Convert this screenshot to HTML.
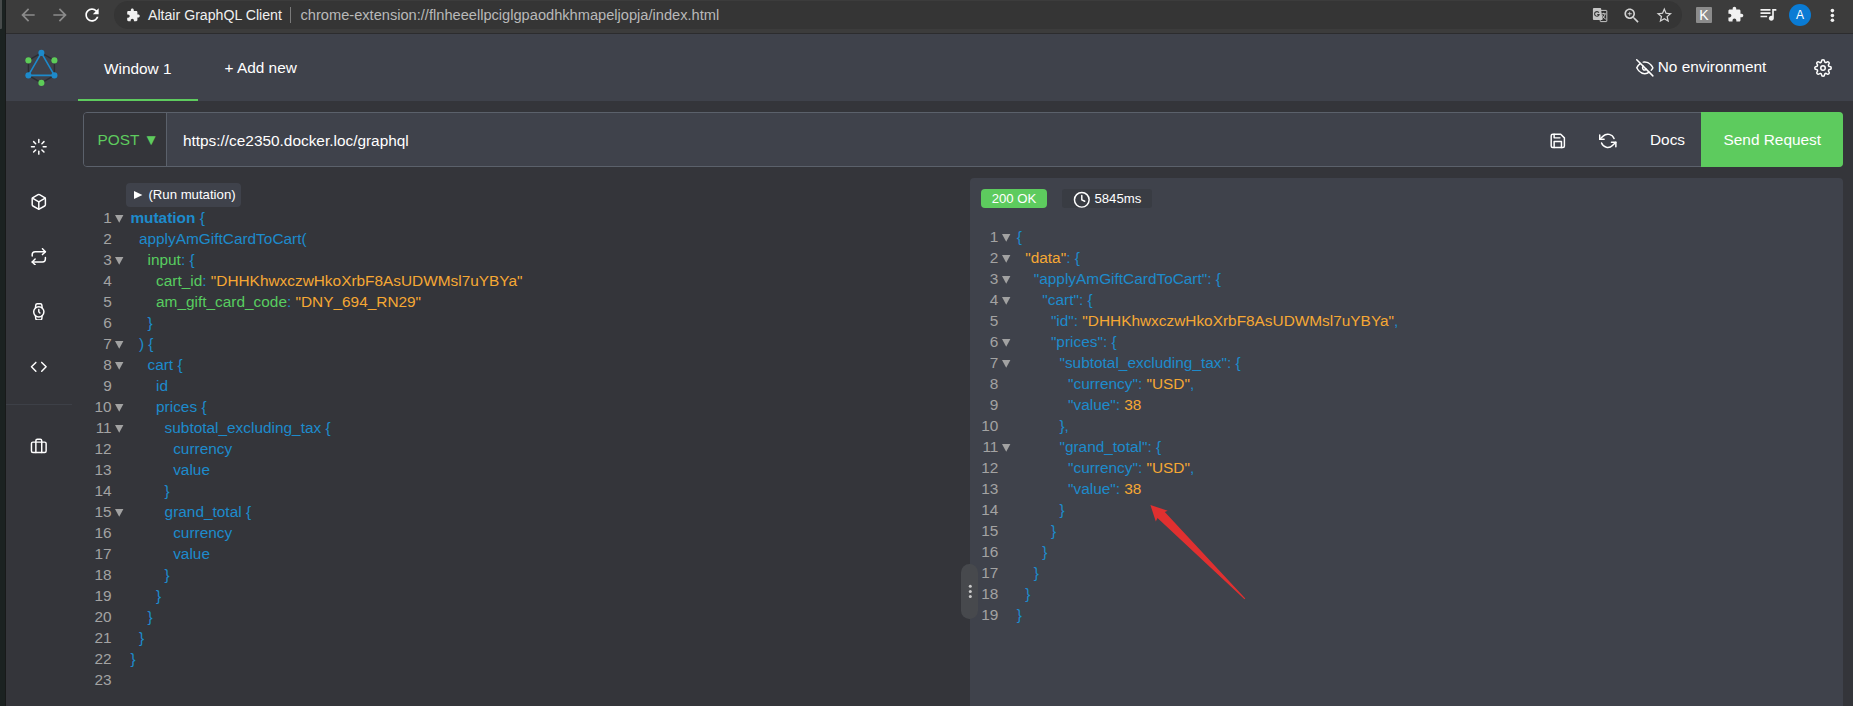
<!DOCTYPE html>
<html lang="en">
<head>
<meta charset="utf-8">
<title>Altair GraphQL Client</title>
<style>
*{box-sizing:border-box;margin:0;padding:0}
html,body{width:1853px;height:706px;overflow:hidden;background:#34353a;font-family:"Liberation Sans",sans-serif;color:#fff}
body{position:relative}
.abs{position:absolute}
svg.fi{fill:none;stroke:#fff;stroke-width:2;stroke-linecap:round;stroke-linejoin:round;position:absolute}
/* left desktop strip */
#strip{left:0;top:0;width:6px;height:706px;background:#1b2221;border-right:1px solid #181a1a}
#strip2{left:0;top:0;width:2px;height:29px;background:#474b4b;border-radius:0 0 1px 0}
/* chrome toolbar */
#chrome{left:6px;top:0;width:1847px;height:34px;background:#3c3c3c;border-bottom:1px solid #2c2c2e}
#omni{left:108px;top:1px;width:1568px;height:28px;border-radius:14px;background:#353535}
#chrome .t{position:absolute;white-space:nowrap;font-size:14px;line-height:18px;top:6px}
/* app header */
#header{left:6px;top:34px;width:1847px;height:67px;background:#3f424b}
#tab1{left:78px;top:34px;width:120px;height:67px;border-bottom:2px solid #5ecb5e}
.hl{position:absolute;white-space:nowrap;font-size:15.4px;line-height:20px;color:#fff}
/* url bar */
#urlbar{left:83px;top:112px;width:1760px;height:55px;background:#3f424b;border:1px solid #5b616b;border-radius:4px}
#method{left:0;top:0;width:83px;height:53px;background:#34353a;border-right:1px solid #5b616b;border-radius:3px 0 0 3px}
#send{left:1701px;top:112px;width:142px;height:55px;background:#5dcb5e;border-radius:0 4px 4px 0}
/* editors */
.code{position:absolute;font-size:15.4px;line-height:21px;white-space:pre;color:#1d8bcc}
.ln{position:absolute;text-align:right;font-size:15.4px;line-height:21px;color:#a3a3a3;white-space:pre}
.fold{position:absolute;font-size:11px;line-height:21px;color:#a9a9a9}
.k{font-weight:bold}
.g{color:#58cd60}
.o{color:#f6a834}
.p{color:#1d8bcc}
#respane{left:970px;top:178px;width:873px;height:540px;background:#3f424b;border-radius:4px}
#ok{left:981px;top:189px;width:66px;height:19px;background:#5dcb5e;border-radius:4px;font-size:13.2px;line-height:19px;text-align:center}
#time{left:1062px;top:189px;width:90px;height:19px;background:#393c43;border-radius:3px}
#runbtn{left:126px;top:183px;width:115px;height:24px;background:#3f424b;border-radius:4px;font-size:13.2px;line-height:23px;white-space:nowrap}
#handle{left:961px;top:564px;width:17px;height:55px;background:#47494d;border-radius:8.500px}
</style>
</head>
<body>
<div id="strip" class="abs"></div><div id="strip2" class="abs"></div>

<!-- ================= Chrome toolbar ================= -->
<div id="chrome" class="abs">
  <div id="omni" class="abs"></div>
  <svg class="abs" style="left:12px;top:5px" width="20" height="20" viewBox="0 0 24 24"><path fill="#8b8b8b" d="M20 11H7.830l5.590-5.590L12 4l-8 8 8 8 1.410-1.410L7.830 13H20v-2z"/></svg>
  <svg class="abs" style="left:44px;top:5px" width="20" height="20" viewBox="0 0 24 24"><path fill="#8b8b8b" d="M12 4l-1.410 1.410L16.170 11H4v2h12.170l-5.580 5.590L12 20l8-8z"/></svg>
  <svg class="abs" style="left:76px;top:5px" width="20" height="20" viewBox="0 0 24 24"><path fill="#fff" d="M17.650 6.350C16.200 4.900 14.210 4 12 4c-4.420 0-7.990 3.580-7.990 8s3.570 8 7.990 8c3.730 0 6.840-2.550 7.730-6h-2.080c-.82 2.330-3.040 4-5.650 4-3.310 0-6-2.690-6-6s2.690-6 6-6c1.660 0 3.140.69 4.220 1.780L13 11h7V4l-2.350 2.350z"/></svg>
  <svg class="abs" style="left:119.500px;top:7.700px" width="14.400" height="14.400" viewBox="0 0 24 24"><path fill="#f1f1f1" d="M20.500 11H19V7c0-1.100-.9-2-2-2h-4V3.500C13 2.120 11.880 1 10.500 1S8 2.120 8 3.500V5H4c-1.100 0-1.990.9-1.990 2v3.800H3.500c1.490 0 2.700 1.210 2.700 2.700s-1.210 2.700-2.700 2.700H2V20c0 1.100.9 2 2 2h3.800v-1.500c0-1.490 1.210-2.700 2.700-2.700 1.490 0 2.700 1.210 2.700 2.700V22H17c1.100 0 2-.9 2-2v-4h1.500c1.380 0 2.500-1.120 2.500-2.500S21.880 11 20.500 11z"/></svg>
  <div class="t" id="ctitle" style="left:142px;color:#f0f0f0;font-size:14.15px">Altair GraphQL Client</div>
  <div class="abs" style="left:284px;top:7px;width:1px;height:16px;background:#7a7a7a"></div>
  <div class="t" id="curl" style="left:294.500px;color:#b9b9b9;font-size:14.63px">chrome-extension://flnheeellpciglgpaodhkhmapeljopja/index.html</div>
  <!-- translate -->
  <svg class="abs" style="left:1586px;top:7px" width="16" height="16" viewBox="0 0 16 16"><rect x="8.200" y="3.400" width="6.600" height="11.200" rx="0.500" fill="#2f2f2f" stroke="#c6c6c6" stroke-width="1"/><path d="M9.500 6.800h4.300M11.600 5.800v1M13.100 6.900c-.5 2.200-1.700 3.900-3.500 5M10.300 8.300c.7 1.700 1.900 3 3.500 3.900" fill="none" stroke="#d8d8d8" stroke-width="0.900"/><path d="M1.900 0.900h6.300a1 1 0 0 1 1 1v1.300l1.300 9.800H1.900a1 1 0 0 1-1-1V1.900a1 1 0 0 1 1-1z" fill="#c6c6c6"/><path d="M6.900 5.800A2.300 2.300 0 1 0 7.100 7.500H5.200" fill="none" stroke="#3a3a3a" stroke-width="1.100"/></svg>
  <svg class="abs" style="left:1616.200px;top:5.800px" width="19.500" height="19.500" viewBox="0 0 24 24"><path fill="#d4d4d4" d="M15.500 14h-.79l-.28-.27C15.410 12.590 16 11.110 16 9.500 16 5.910 13.090 3 9.500 3S3 5.910 3 9.500 5.910 16 9.500 16c1.610 0 3.090-.59 4.230-1.570l.27.28v.79l5 4.990L20.490 19l-4.990-5zm-6 0C7.010 14 5 11.990 5 9.500S7.010 5 9.500 5 14 7.010 14 9.500 11.990 14 9.500 14zm2.500-4h-2v2H9v-2H7V9h2V7h1v2h2v1z"/></svg>
  <svg class="abs" style="left:1648.600px;top:6.300px" width="18.600" height="18.600" viewBox="0 0 24 24"><path fill="#d4d4d4" d="M22 9.240l-7.190-.62L12 2 9.190 8.630 2 9.240l5.460 4.730L5.820 21 12 17.270 18.180 21l-1.630-7.030L22 9.240zM12 15.400l-3.760 2.270 1-4.280-3.320-2.880 4.380-.38L12 6.100l1.710 4.040 4.380.38-3.320 2.880 1 4.280L12 15.400z"/></svg>
  <div class="abs" style="left:1690px;top:7px;width:16px;height:16px;background:#8c8c8c;border-radius:1px;color:#fff;font-size:14px;line-height:16px;text-align:center">K</div>
  <svg class="abs" style="left:1721px;top:6px" width="17" height="17" viewBox="0 0 24 24"><path fill="#f1f1f1" d="M20.500 11H19V7c0-1.100-.9-2-2-2h-4V3.500C13 2.120 11.880 1 10.500 1S8 2.120 8 3.500V5H4c-1.100 0-1.990.9-1.990 2v3.800H3.500c1.490 0 2.700 1.210 2.700 2.700s-1.210 2.700-2.700 2.700H2V20c0 1.100.9 2 2 2h3.800v-1.500c0-1.490 1.210-2.700 2.700-2.700 1.490 0 2.700 1.210 2.700 2.700V22H17c1.100 0 2-.9 2-2v-4h1.500c1.380 0 2.500-1.120 2.500-2.500S21.880 11 20.500 11z"/></svg>
  <svg class="abs" style="left:1751.600px;top:4.200px" width="20" height="20" viewBox="0 0 24 24"><path fill="#f1f1f1" d="M15 6H3v2h12V6zm0 4H3v2h12v-2zM3 16h8v-2H3v2zM17 6v8.180c-.31-.11-.65-.18-1-.18-1.660 0-3 1.340-3 3s1.340 3 3 3 3-1.340 3-3V8h3V6h-5z"/></svg>
  <div class="abs" style="left:1783px;top:4px;width:22px;height:22px;border-radius:11px;background:#0a7bd4;color:#fff;font-size:12px;line-height:22px;text-align:center">A</div>
  <svg class="abs" style="left:1820px;top:5px" width="12" height="20" viewBox="0 0 12 20"><circle cx="6.400" cy="5.600" r="1.800" fill="#f1f1f1"/><circle cx="6.400" cy="10.500" r="1.800" fill="#f1f1f1"/><circle cx="6.400" cy="15.300" r="1.800" fill="#f1f1f1"/></svg>
</div>

<!-- ================= App header ================= -->
<div id="header" class="abs"></div>
<div id="tab1" class="abs"></div>
<div class="hl" style="left:104px;top:59px">Window 1</div>
<div class="hl" style="left:224.500px;top:58px">+ Add new</div>
<div class="hl" style="left:1657.700px;top:57px">No environment</div>

<!-- ================= URL bar ================= -->
<div id="urlbar" class="abs"><div id="method" class="abs"></div></div>
<div class="hl" style="left:97.500px;top:130px;color:#5ecb5e">POST ▼</div>
<div class="hl" style="left:182.900px;top:131px">https://ce2350.docker.loc/graphql</div>
<div class="hl" style="left:1650px;top:130px">Docs</div>
<div id="send" class="abs"></div>
<div class="hl" style="left:1723.500px;top:130px">Send Request</div>

<!-- ================= Query editor ================= -->
<div id="runbtn" class="abs"><svg class="abs" style="left:8.300px;top:8px" width="9" height="9" viewBox="0 0 9 9"><polygon points="0,0 8.400,4 0,8" fill="#fff"/></svg><span style="margin-left:22.400px">(Run mutation)</span></div>
<div class="ln" style="left:84px;top:207px;width:27.700px">1
2
3
4
5
6
7
8
9
10
11
12
13
14
15
16
17
18
19
20
21
22
23</div>
<div class="code" style="left:130.400px;top:207px"><span class="k">mutation</span> {
  applyAmGiftCardToCart(
    <span class="g">input</span>: {
      <span class="g">cart_id</span>: <span class="o">"DHHKhwxczwHkoXrbF8AsUDWMsl7uYBYa"</span>
      <span class="g">am_gift_card_code</span>: <span class="o">"DNY_694_RN29"</span>
    }
  ) {
    cart {
      id
      prices {
        subtotal_excluding_tax {
          currency
          value
        }
        grand_total {
          currency
          value
        }
      }
    }
  }
}
</div>

<!-- ================= Response pane ================= -->
<div id="respane" class="abs"></div>
<div id="ok" class="abs">200 OK</div>
<div id="time" class="abs"></div>
<div class="hl" style="left:1094.400px;top:189px;font-size:13.2px;line-height:19px">5845ms</div>
<div class="ln" style="left:970px;top:226px;width:28.400px">1
2
3
4
5
6
7
8
9
10
11
12
13
14
15
16
17
18
19</div>
<div class="code" style="left:1016.700px;top:226px">{
  <span class="o">"data"</span>: {
    "applyAmGiftCardToCart": {
      "cart": {
        "id": <span class="o">"DHHKhwxczwHkoXrbF8AsUDWMsl7uYBYa"</span>,
        "prices": {
          "subtotal_excluding_tax": {
            "currency": <span class="o">"USD"</span>,
            "value": <span class="o">38</span>
          },
          "grand_total": {
            "currency": <span class="o">"USD"</span>,
            "value": <span class="o">38</span>
          }
        }
      }
    }
  }
}
</div>
<svg class="abs" style="left:114.8px;top:207px" width="10" height="483" viewBox="0 0 10 483"><polygon points="0,7.9 8.400,7.9 4.200,15.7" fill="#a2a2a2"/><polygon points="0,49.9 8.400,49.9 4.200,57.7" fill="#a2a2a2"/><polygon points="0,133.9 8.400,133.9 4.200,141.7" fill="#a2a2a2"/><polygon points="0,154.9 8.400,154.9 4.200,162.7" fill="#a2a2a2"/><polygon points="0,196.9 8.400,196.9 4.200,204.7" fill="#a2a2a2"/><polygon points="0,217.9 8.400,217.9 4.200,225.7" fill="#a2a2a2"/><polygon points="0,301.9 8.400,301.9 4.200,309.7" fill="#a2a2a2"/></svg>
<svg class="abs" style="left:1001.600px;top:226px" width="10" height="483" viewBox="0 0 10 483"><polygon points="0,7.9 8.400,7.9 4.200,15.7" fill="#a2a2a2"/><polygon points="0,28.9 8.400,28.9 4.200,36.7" fill="#a2a2a2"/><polygon points="0,49.9 8.400,49.9 4.200,57.7" fill="#a2a2a2"/><polygon points="0,70.9 8.400,70.9 4.200,78.7" fill="#a2a2a2"/><polygon points="0,112.9 8.400,112.9 4.200,120.7" fill="#a2a2a2"/><polygon points="0,133.9 8.400,133.9 4.200,141.7" fill="#a2a2a2"/><polygon points="0,217.9 8.400,217.9 4.200,225.7" fill="#a2a2a2"/></svg>
<div id="handle" class="abs"></div>
<!-- logo -->
<svg class="abs" style="left:0;top:34.300px" width="80" height="67" viewBox="0 34 80 67"><polygon points="41.4,52.9 54.4,60.4 54.4,75.4 41.4,82.9 28.4,75.4 28.4,60.4" fill="none" stroke="#2c2e33" stroke-width="1.400"/><polygon points="41.4,52.9 54.4,75.4 28.4,75.4" fill="none" stroke="#1d8acb" stroke-width="1.600"/><circle cx="41.4" cy="52.9" r="3.050" fill="#1d8acb"/><circle cx="54.4" cy="60.4" r="3.050" fill="#5dcc58"/><circle cx="54.4" cy="75.4" r="3.050" fill="#1d8acb"/><circle cx="41.4" cy="82.9" r="3.050" fill="#5dcc58"/><circle cx="28.4" cy="75.4" r="3.050" fill="#1d8acb"/><circle cx="28.4" cy="60.4" r="3.050" fill="#5dcc58"/></svg>
<!-- sidebar icons -->
<svg class="fi" style="left:30.10px;top:137.50px" width="17.6" height="17.6" viewBox="0 0 24 24"><line x1="12" y1="2" x2="12" y2="6"/><line x1="12" y1="18" x2="12" y2="22"/><line x1="4.930" y1="4.930" x2="7.760" y2="7.760"/><line x1="16.240" y1="16.240" x2="19.070" y2="19.070"/><line x1="2" y1="12" x2="6" y2="12"/><line x1="18" y1="12" x2="22" y2="12"/><line x1="4.930" y1="19.070" x2="7.760" y2="16.240"/><line x1="16.240" y1="7.760" x2="19.070" y2="4.930"/></svg>
<svg class="fi" style="left:30.20px;top:192.80px" width="17.6" height="17.6" viewBox="0 0 24 24"><path d="M21 16V8a2 2 0 0 0-1-1.730l-7-4a2 2 0 0 0-2 0l-7 4A2 2 0 0 0 3 8v8a2 2 0 0 0 1 1.730l7 4a2 2 0 0 0 2 0l7-4A2 2 0 0 0 21 16z"/><polyline points="3.270 6.960 12 12.010 20.730 6.960"/><line x1="12" y1="22.080" x2="12" y2="12"/></svg>
<svg class="fi" style="left:30.20px;top:247.90px" width="17.6" height="17.6" viewBox="0 0 24 24"><polyline points="17 1 21 5 17 9"/><path d="M3 11V9a4 4 0 0 1 4-4h14"/><polyline points="7 23 3 19 7 15"/><path d="M21 13v2a4 4 0 0 1-4 4H3"/></svg>
<svg class="fi" style="left:30.20px;top:302.60px" width="17.6" height="17.6" viewBox="0 0 24 24"><circle cx="12" cy="12" r="7"/><polyline points="12 9 12 12 13.500 13.500"/><path d="M16.510 17.350l-.35 3.830a2 2 0 0 1-2 1.820H9.830a2 2 0 0 1-2-1.820l-.35-3.830m.01-10.700l.35-3.830A2 2 0 0 1 9.830 1h4.350a2 2 0 0 1 2 1.820l.35 3.830"/></svg>
<svg class="fi" style="left:30.20px;top:358.00px" width="17.6" height="17.6" viewBox="0 0 24 24"><polyline points="16 18 22 12 16 6"/><polyline points="8 6 2 12 8 18"/></svg>
<div class="abs" style="left:6px;top:404px;width:66px;height:1px;background:#3d4047"></div>
<svg class="fi" style="left:30.20px;top:437.20px" width="17.6" height="17.6" viewBox="0 0 24 24"><rect x="2" y="7" width="20" height="14" rx="2" ry="2"/><path d="M16 21V5a2 2 0 0 0-2-2h-4a2 2 0 0 0-2 2v16"/></svg>
<svg class="fi" style="left:1636.00px;top:59.20px" width="17.6" height="17.6" viewBox="0 0 24 24"><path d="M17.940 17.940A10.070 10.070 0 0 1 12 20c-7 0-11-8-11-8a18.450 18.450 0 0 1 5.060-5.940M9.900 4.240A9.120 9.120 0 0 1 12 4c7 0 11 8 11 8a18.500 18.500 0 0 1-2.160 3.190m-6.720-1.070a3 3 0 1 1-4.240-4.240"/><line x1="1" y1="1" x2="23" y2="23"/></svg>
<svg class="fi" style="left:1814.00px;top:59.10px" width="18" height="18" viewBox="0 0 24 24"><circle cx="12" cy="12" r="3"/><path d="M19.400 15a1.650 1.650 0 0 0 .33 1.820l.06.06a2 2 0 0 1 0 2.830 2 2 0 0 1-2.830 0l-.06-.06a1.650 1.650 0 0 0-1.820-.33 1.650 1.650 0 0 0-1 1.510V21a2 2 0 0 1-2 2 2 2 0 0 1-2-2v-.09A1.650 1.650 0 0 0 9 19.400a1.650 1.650 0 0 0-1.820.33l-.06.06a2 2 0 0 1-2.830 0 2 2 0 0 1 0-2.830l.06-.06a1.650 1.650 0 0 0 .33-1.820 1.650 1.650 0 0 0-1.510-1H3a2 2 0 0 1-2-2 2 2 0 0 1 2-2h.09A1.650 1.650 0 0 0 4.600 9a1.650 1.650 0 0 0-.33-1.820l-.06-.06a2 2 0 0 1 0-2.830 2 2 0 0 1 2.830 0l.06.06a1.650 1.650 0 0 0 1.820.33H9a1.650 1.650 0 0 0 1-1.510V3a2 2 0 0 1 2-2 2 2 0 0 1 2 2v.09a1.650 1.650 0 0 0 1 1.510 1.650 1.650 0 0 0 1.820-.33l.06-.06a2 2 0 0 1 2.830 0 2 2 0 0 1 0 2.830l-.06.06a1.650 1.650 0 0 0-.33 1.820V9a1.650 1.650 0 0 0 1.510 1H21a2 2 0 0 1 2 2 2 2 0 0 1-2 2h-.09a1.650 1.650 0 0 0-1.510 1z"/></svg>
<svg class="fi" style="left:1548.50px;top:131.90px" width="17.6" height="17.6" viewBox="0 0 24 24"><path d="M19 21H5a2 2 0 0 1-2-2V5a2 2 0 0 1 2-2h11l5 5v11a2 2 0 0 1-2 2z"/><polyline points="17 21 17 13 7 13 7 21"/><polyline points="7 3 7 8 15 8"/></svg>
<svg class="fi" style="left:1599.20px;top:132.10px" width="17.6" height="17.6" viewBox="0 0 24 24"><polyline points="1 4 1 10 7 10"/><polyline points="23 20 23 14 17 14"/><path d="M20.490 9A9 9 0 0 0 5.640 5.640L1 10m22 4l-4.640 4.360A9 9 0 0 1 3.510 15"/></svg>
<svg class="fi" style="left:1073.100px;top:190.600px" width="17.600" height="17.600" viewBox="0 0 24 24"><circle cx="12" cy="12" r="10"/><polyline points="12 6 12 12 16 14"/></svg>
<svg class="abs" style="left:1140px;top:495px" width="120" height="115" viewBox="1140 495 120 115"><polygon points="1150.400,505 1167.700,510.700 1164.800,512.100 1245.300,598.400 1244.500,599.200 1157.500,518 1155.800,521.600" fill="#e03030"/></svg>
<svg class="abs" style="left:961px;top:564px" width="17" height="55" viewBox="0 0 17 55"><circle cx="9.300" cy="22.200" r="1.500" fill="#c8c8c8"/><circle cx="9.300" cy="27.500" r="1.500" fill="#c8c8c8"/><circle cx="9.300" cy="32.600" r="1.500" fill="#c8c8c8"/></svg>
</body>
</html>
